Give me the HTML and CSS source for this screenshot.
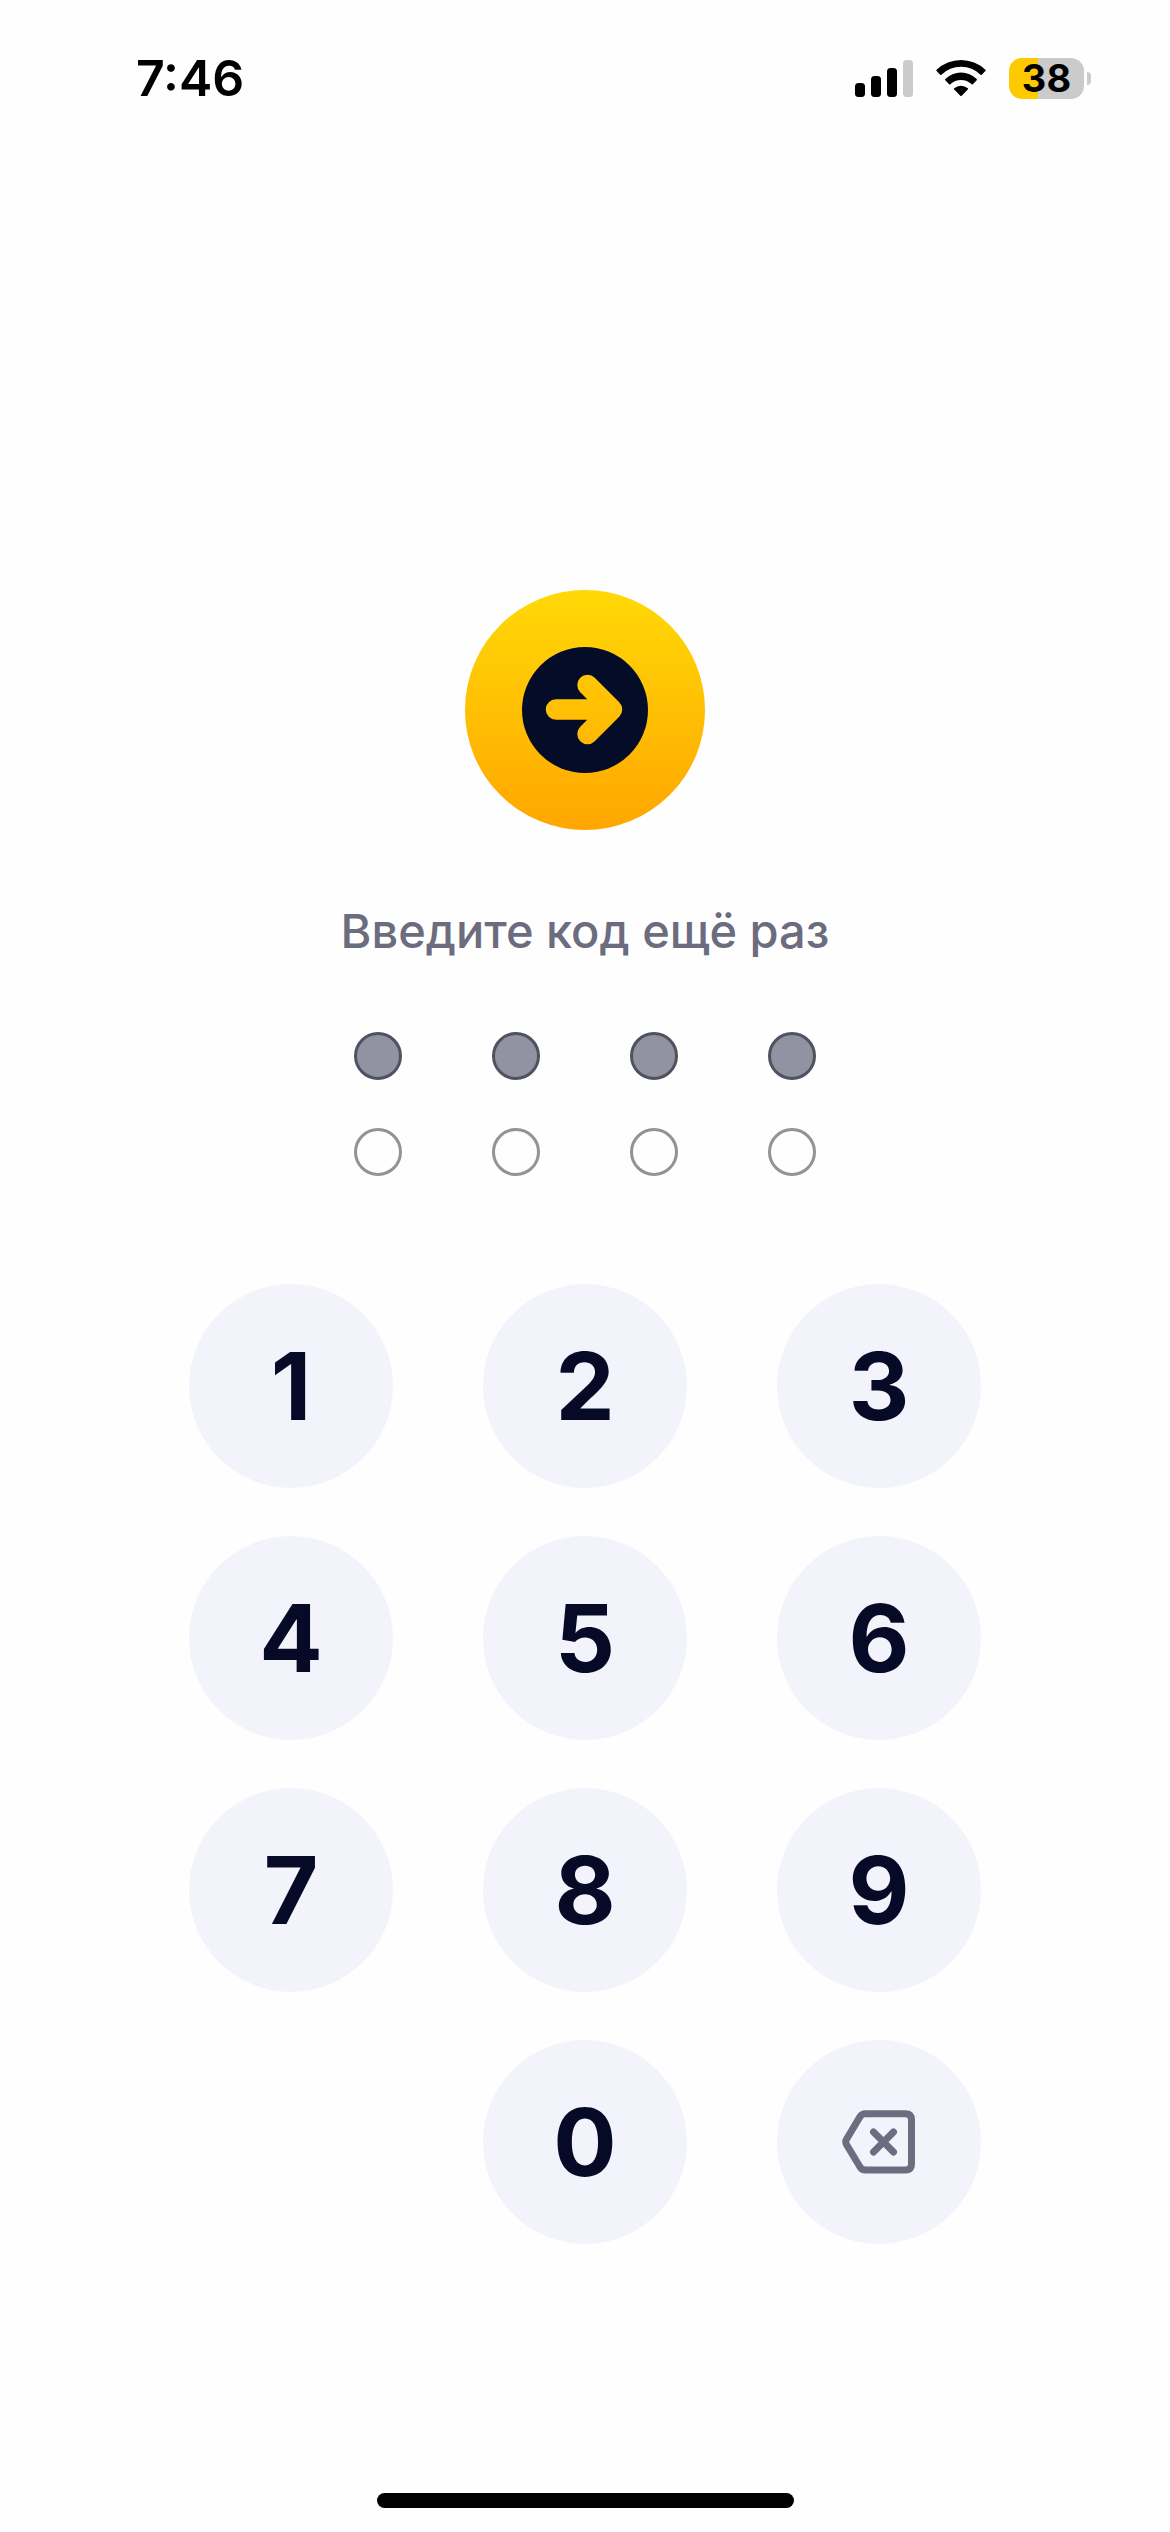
FILE: index.html
```html
<!DOCTYPE html>
<html lang="ru">
<head>
<meta charset="utf-8">
<meta name="viewport" content="width=device-width, initial-scale=1">
<title>Введите код ещё раз</title>
<link rel="stylesheet" href="styles.css">
</head>
<body>
<div class="screen">
  <header class="status">
    <time class="status-time">7:46</time>
    <div class="status-icons">
      <svg class="signal" viewBox="0 0 58 38" aria-hidden="true">
        <rect x="0" y="24" width="10" height="14" rx="3.500"/>
        <rect x="16" y="17" width="10" height="21" rx="3.500"/>
        <rect x="32" y="9" width="10" height="29" rx="3.500"/>
        <rect class="signal-off" x="48" y="1" width="10" height="37" rx="3.500"/>
      </svg>
      <svg class="wifi" viewBox="0 0 50 38" aria-hidden="true">
        <path d="M0.600 10.700A35.500 35.500 0 0 1 49.400 10.700Q50 11.400 49.400 12L45.800 15.700Q45.200 16.200 44.600 15.700A28 28 0 0 0 5.400 15.700Q4.800 16.200 4.200 15.700L0.600 12Q0 11.400 0.600 10.700Z"/>
        <path d="M9.300 20A22.300 22.300 0 0 1 40.700 20Q41.300 20.700 40.700 21.300L36.900 25.200Q36.300 25.700 35.700 25.200A15.400 15.400 0 0 0 14.300 25.200Q13.700 25.700 13.100 25.200L9.300 21.300Q8.700 20.700 9.300 20Z"/>
        <path d="M18.200 29.200A10.400 10.400 0 0 1 31.800 29.200Q32.500 29.900 31.800 30.500L25.700 36.700Q25 37.400 24.300 36.700L18.200 30.500Q17.500 29.900 18.200 29.200Z"/>
      </svg>
      <div class="battery">
        <div class="battery-body">38</div>
        <div class="battery-tip"></div>
      </div>
    </div>
  </header>

  <main class="passcode">
    <svg class="logo" viewBox="0 0 240 240" aria-hidden="true">
      <defs>
        <linearGradient id="gold" gradientUnits="userSpaceOnUse" x1="120" y1="0" x2="120" y2="240">
          <stop offset="0" stop-color="#ffd906"/>
          <stop offset="1" stop-color="#ffa600"/>
        </linearGradient>
      </defs>
      <circle cx="120" cy="120" r="120" fill="url(#gold)"/>
      <circle cx="120" cy="120" r="63" fill="#050c27"/>
      <path d="M91 119.500H146M122.500 95L147 119.500L122.500 144" fill="none" stroke="url(#gold)" stroke-width="20.500" stroke-linecap="round" stroke-linejoin="round"/>
    </svg>
    <h1 class="title">Введите код ещё раз</h1>
    <div class="codes">
      <div class="dots" role="img" aria-label="Код введён">
        <span class="dot dot-filled"></span><span class="dot dot-filled"></span><span class="dot dot-filled"></span><span class="dot dot-filled"></span>
      </div>
      <div class="dots" role="img" aria-label="Повтор кода: введено 0 из 4">
        <span class="dot"></span><span class="dot"></span><span class="dot"></span><span class="dot"></span>
      </div>
    </div>
    <div class="keypad">
      <button class="key" type="button">1</button>
      <button class="key" type="button">2</button>
      <button class="key" type="button">3</button>
      <button class="key" type="button">4</button>
      <button class="key" type="button">5</button>
      <button class="key" type="button">6</button>
      <button class="key" type="button">7</button>
      <button class="key" type="button">8</button>
      <button class="key" type="button">9</button>
      <button class="key key-zero" type="button">0</button>
      <button class="key" type="button" aria-label="Удалить">
        <svg class="backspace" viewBox="0 0 74 64" aria-hidden="true">
          <path d="M23 3.700H63.500Q69.500 3.700 69.500 9.700V54Q69.500 60 63.500 60H23Q20 60 18 57L4.500 34.500Q3 31.800 4.500 29.200L18 6.700Q20 3.700 23 3.700Z"/>
          <path d="M31.500 22L51.500 42M51.500 22L31.500 42"/>
        </svg>
      </button>
    </div>
  </main>

  <div class="home-bar"></div>
</div>
</body>
</html>
```

FILE: styles.css
```css
* {
  box-sizing: border-box;
}

body {
  margin: 0;
  background: #fefefe;
  font-family: Inter, "Liberation Sans", sans-serif;
}

.screen {
  min-height: 100vh;
  display: flex;
  flex-direction: column;
  align-items: center;
}

.status {
  align-self: stretch;
  display: flex;
  align-items: center;
  justify-content: space-between;
  padding: 52px 79px 0 136px;
  color: #000;
}

.status-time {
  font-size: 50px;
  line-height: 52px;
  font-weight: 600;
}

.status-icons {
  display: flex;
  align-items: center;
  gap: 23px;
}

.signal {
  width: 58px;
  height: 38px;
}

.signal-off {
  fill: #cbcbcb;
}

.wifi {
  width: 50px;
  height: 38px;
}

.battery {
  display: flex;
  align-items: center;
  gap: 3px;
}

.battery-body {
  width: 75px;
  border-radius: 13px;
  background: linear-gradient(90deg, #ffc900 29px, #cbcbcb 29px);
  font-size: 38px;
  line-height: 41px;
  font-weight: 700;
  text-align: center;
}

.battery-tip {
  width: 4px;
  height: 13px;
  border-radius: 0 4px 4px 0;
  background: #cbcbcb;
}

.passcode {
  display: flex;
  flex-direction: column;
  align-items: center;
  padding-top: 486px;
}

.logo {
  width: 240px;
  height: 240px;
}

.title {
  margin: 72px 0;
  color: #6b6c7e;
  font-size: 47px;
  line-height: 58px;
  font-weight: 500;
}

.codes {
  display: grid;
  gap: 48px;
}

.dots {
  display: flex;
  gap: 90px;
}

.dot {
  width: 48px;
  height: 48px;
  border: 3px solid #929297;
  border-radius: 50%;
}

.dot-filled {
  border-color: #515260;
  background: #9193a2;
}

.keypad {
  display: grid;
  grid-template-columns: repeat(3, 204px);
  gap: 48px 90px;
  margin-top: 108px;
}

.key {
  display: flex;
  align-items: center;
  justify-content: center;
  height: 204px;
  padding: 0;
  border: 0;
  border-radius: 50%;
  background: #f3f4fb;
  color: #060a27;
  font-family: inherit;
  font-size: 94px;
  line-height: 112px;
  font-weight: 700;
}

.key-zero {
  grid-column: 2;
}

.backspace {
  width: 74px;
  height: 64px;
  fill: none;
  stroke: #6c6d80;
  stroke-width: 7;
  stroke-linecap: round;
}

.home-bar {
  width: 417px;
  height: 15px;
  margin: auto 0 24px;
  border-radius: 8px;
  background: #000;
}
```
